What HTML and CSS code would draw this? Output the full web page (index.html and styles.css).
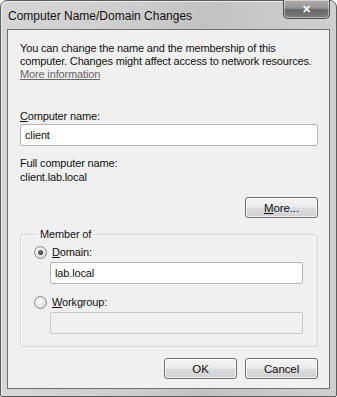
FILE: index.html
```html
<!DOCTYPE html>
<html lang="en">

<head>
    <meta charset="UTF-8">
    <meta name="viewport" content="width=device-width, initial-scale=1.0">
    <title>Computer Name/Domain Changes</title>
    <link rel="stylesheet" href="styles.css">
</head>

<body>

    <div class="window">
        <div class="titlebar">
            <span class="title">Computer Name/Domain Changes</span>
            <div class="close">&#x2715;</div>
        </div>

        <div class="client">
            <p class="intro">
                You can change the name and the membership of this<br>
                computer. Changes might affect access to network resources.<br>
                <a href="#" class="more-info">More information</a>
            </p>

            <label class="field-label" for="computerName"><u>C</u>omputer name:</label>
            <input type="text" class="textbox" id="computerName" value="client">

            <div class="full-name">
                <div>Full computer name:</div>
                <div>client.lab.local</div>
            </div>

            <div class="right-row">
                <button class="btn"><u>M</u>ore...</button>
            </div>

            <fieldset class="group">
                <legend>Member of</legend>

                <div class="radio-row">
                    <span class="radio checked"></span>
                    <span><u>D</u>omain:</span>
                </div>
                <input type="text" class="textbox group-input" value="lab.local">

                <div class="radio-row">
                    <span class="radio"></span>
                    <span><u>W</u>orkgroup:</span>
                </div>
                <input type="text" class="textbox group-input" disabled>
            </fieldset>

            <div class="buttons">
                <button class="btn">OK</button>
                <button class="btn">Cancel</button>
            </div>
        </div>
    </div>

</body>

</html>
```

FILE: styles.css
```css
:root {
    --text-color: #111;
    --client-bg: #f0f0f0;
    --ui-font: 'Liberation Sans', Arial, sans-serif;
}

body {
    margin: 0;
    font-family: var(--ui-font);
    font-size: 11px;
    letter-spacing: -0.15px;
    color: var(--text-color);
    background: #fff;
}

.window {
    width: 337px;
    height: 397px;
    box-sizing: border-box;
    border: 1px solid #5c5c5c;
    border-radius: 7px 7px 2px 2px;
    background: linear-gradient(to right, #d6d6d6 0%, #cdcdcd 40%, #c2c2c2 60%, #cfcfcf 100%);
    box-shadow: inset 1px 1px 0 #ececec;
    display: flex;
    flex-direction: column;
}

.titlebar {
    height: 28px;
    display: flex;
    align-items: flex-start;
}

.title {
    margin: 8px 0 0 7px;
    line-height: 14px;
    font-size: 12px;
    letter-spacing: 0;
}

.close {
    margin-left: auto;
    margin-right: 6px;
    margin-top: -1px;
    width: 47px;
    height: 19px;
    box-sizing: border-box;
    border: 1px solid #4e4e4e;
    border-top: none;
    border-radius: 0 0 5px 5px;
    background: linear-gradient(to bottom, #b0b0b0 0%, #939393 45%, #666 55%, #7e7e7e 100%);
    box-shadow: inset 0 0 0 1px rgba(255, 255, 255, 0.45);
    color: #fff;
    font-size: 11px;
    font-weight: bold;
    line-height: 18px;
    text-align: center;
}

.client {
    margin: 0 6px 7px 6px;
    flex: 1;
    border: 1px solid #6f6f6f;
    background: var(--client-bg);
    padding: 12px 11px 0 12px;
}

.intro {
    margin: 0;
    line-height: 13px;
    white-space: nowrap;
}

.more-info {
    color: #666;
    text-decoration: underline;
}

.field-label {
    display: block;
    margin-top: 29px;
    line-height: 13px;
}

.textbox {
    display: block;
    width: 100%;
    height: 22px;
    box-sizing: border-box;
    margin: 1px 0 0;
    padding: 0 4px;
    border: 1px solid #b5b5b5;
    border-radius: 2px;
    background: #fff;
    font-family: var(--ui-font);
    font-size: 11px;
    letter-spacing: -0.15px;
    color: var(--text-color);
}

.textbox:disabled {
    background: #f0f0f0;
    border-color: #c8c8c8;
}

.full-name {
    margin-top: 10px;
    line-height: 14px;
}

.right-row {
    display: flex;
    justify-content: flex-end;
    margin-top: 13px;
}

.btn {
    width: 73px;
    height: 21px;
    box-sizing: border-box;
    padding: 0;
    border: 1px solid #707070;
    border-radius: 3px;
    background: linear-gradient(to bottom, #f4f4f4 0%, #ececec 45%, #dcdcdc 55%, #d0d0d0 100%);
    box-shadow: inset 0 0 0 1px rgba(255, 255, 255, 0.7);
    font-family: var(--ui-font);
    font-size: 11.5px;
    letter-spacing: -0.1px;
    color: var(--text-color);
}

.group {
    margin: 10px 0 0;
    padding: 4px 14px 12px 13px;
    border: 1px solid #d6d6d6;
    border-radius: 3px;
    box-shadow: inset 1px 1px 0 #fff;
}

.group legend {
    padding: 0 2px;
    margin-left: 4px;
    line-height: 13px;
}

.radio-row {
    display: flex;
    align-items: center;
    gap: 5px;
    line-height: 14px;
}

.radio-row+.group-input+.radio-row {
    margin-top: 11px;
}

.radio {
    width: 13px;
    height: 13px;
    box-sizing: border-box;
    border-radius: 50%;
    border: 1px solid #8a8a8a;
    background: radial-gradient(circle at 40% 40%, #fdfdfd 0%, #e2e2e2 60%, #cfcfcf 100%);
    display: flex;
    align-items: center;
    justify-content: center;
}

.radio.checked::after {
    content: "";
    width: 5px;
    height: 5px;
    border-radius: 50%;
    background: radial-gradient(circle at 40% 40%, #777 0%, #222 100%);
}

.group-input {
    margin: 3px 0 0 16px;
    width: calc(100% - 16px);
}

.buttons {
    display: flex;
    justify-content: flex-end;
    gap: 8px;
    margin-top: 11px;
}
```
